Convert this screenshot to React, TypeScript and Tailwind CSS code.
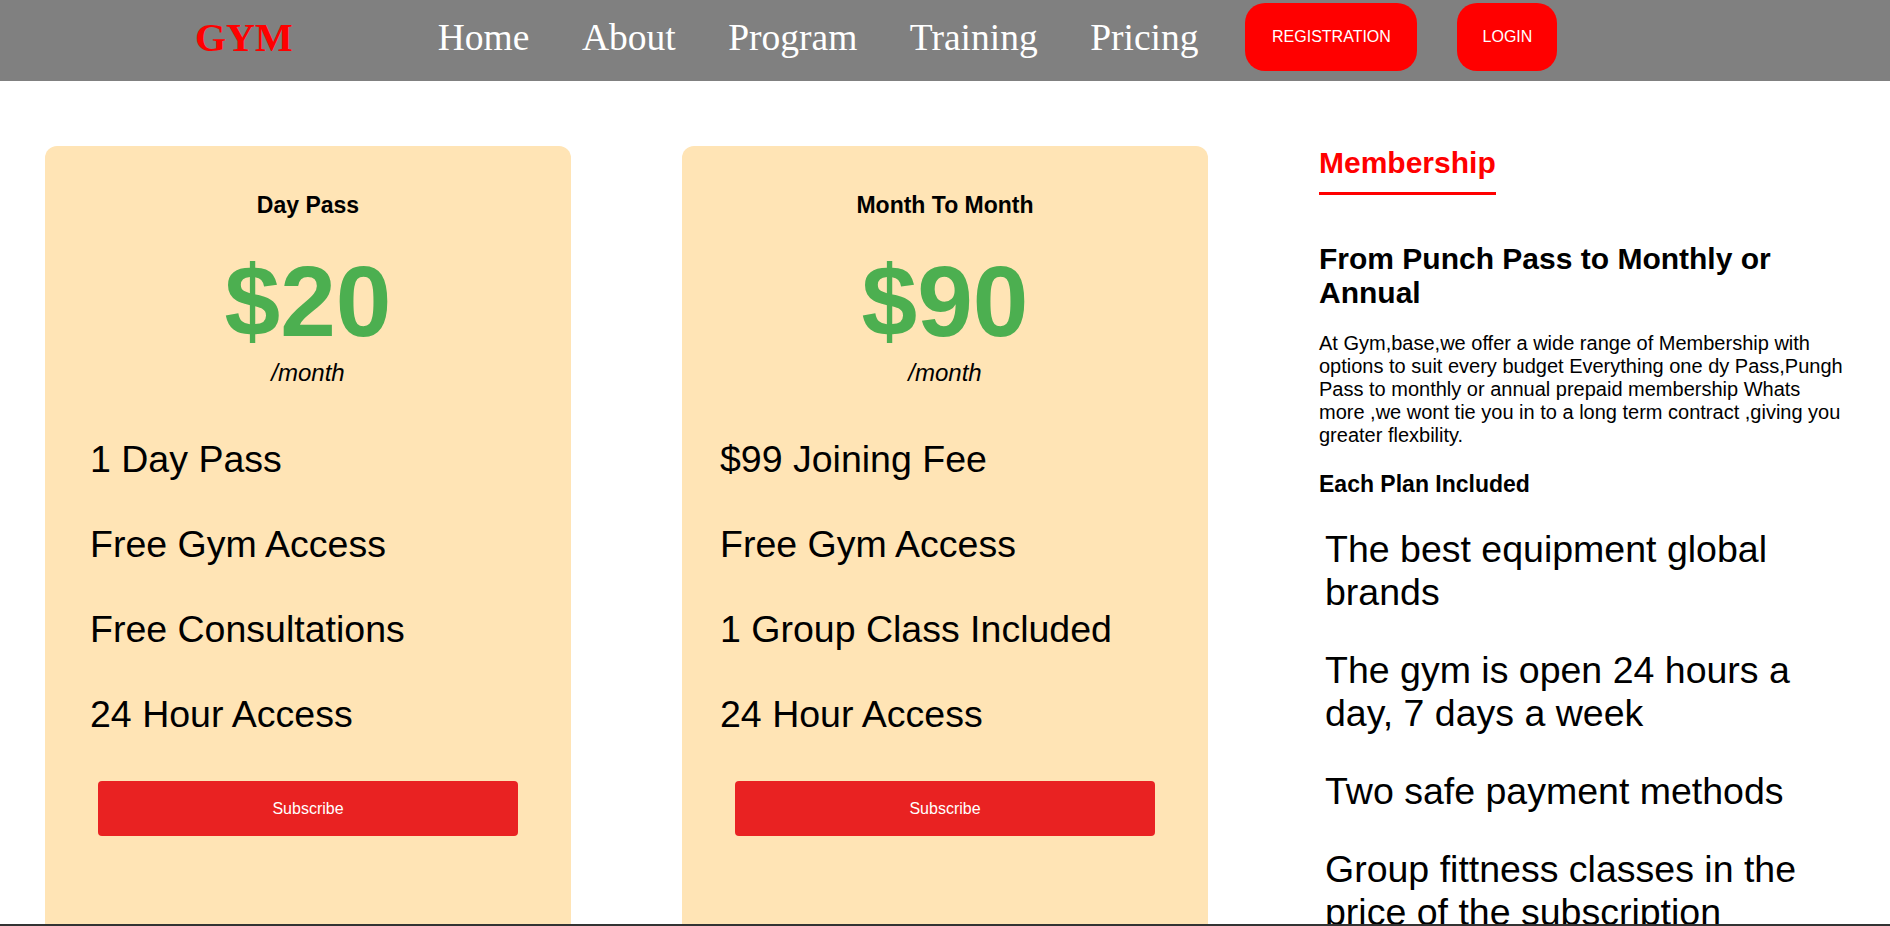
const links = ['Home', 'About', 'Program', 'Training', 'Pricing'];

const plans = [
  {
    name: 'Day Pass',
    price: '$20',
    pad: 'pl-[45px]',
    items: ['1 Day Pass', 'Free Gym Access', 'Free Consultations', '24 Hour Access'],
  },
  {
    name: 'Month To Month',
    price: '$90',
    pad: 'pl-[38px]',
    items: ['$99 Joining Fee', 'Free Gym Access', '1 Group Class Included', '24 Hour Access'],
  },
];

const perks = [
  'The best equipment global brands',
  'The gym is open 24 hours a day, 7 days a week',
  'Two safe payment methods',
  'Group fittness classes in the price of the subscription',
];

function Navbar() {
  return (
    <nav className="h-[81px] bg-[#808080]">
      <div className="h-[74px] flex items-center pl-[195px]">
        <h1 className="font-['Liberation_Serif',serif] text-[40px] font-bold text-[#ff0000]">GYM</h1>
        <ul className="ml-[145px] flex gap-[52.5px] font-['Liberation_Serif',serif] text-[37.5px] text-white">
          {links.map((l) => (
            <li key={l}>
              <a href="#">{l}</a>
            </li>
          ))}
        </ul>
        <button className="ml-[47px] w-[172px] h-[68px] rounded-[20px] bg-[#ff0000] text-white text-[16px]">
          REGISTRATION
        </button>
        <button className="ml-[40px] w-[100px] h-[68px] rounded-[20px] bg-[#ff0000] text-white text-[16px]">
          LOGIN
        </button>
      </div>
    </nav>
  );
}

function PlanCard({ name, price, pad, items }: { name: string; price: string; pad: string; items: string[] }) {
  return (
    <div className="bg-[#ffe4b5] rounded-[12px] pt-[46px] pb-[100px]">
      <h3 className="text-center text-[23px] font-bold">{name}</h3>
      <p className="mt-[25px] text-center text-[100px] font-bold text-[#4caf50]">{price}</p>
      <p className="text-center text-[24px] italic">/month</p>
      <ul className={`mt-[51px] ${pad} flex flex-col gap-[42px] text-[37.5px]`}>
        {items.map((it) => (
          <li key={it}>{it}</li>
        ))}
      </ul>
      <button className="mt-[45px] mx-auto block w-[420px] h-[55px] rounded-[4px] bg-[#e92222] text-white text-[16px]">
        Subscribe
      </button>
    </div>
  );
}

export default function App() {
  return (
    <div className="min-h-screen bg-white text-black font-['Liberation_Sans',Arial,sans-serif] leading-[normal]">
      <Navbar />
      <section className="mt-[65px] grid grid-cols-3 gap-[111px] px-[45px] items-start">
        {plans.map((p) => (
          <PlanCard key={p.name} {...p} />
        ))}
        <div>
          <h2 className="inline-block text-[30px] font-bold text-[#ff0000] pb-[12px] border-b-[3px] border-[#ff0000]">
            Membership
          </h2>
          <h2 className="mt-[47px] text-[30px] font-bold">From Punch Pass to Monthly or Annual</h2>
          <p className="mt-[22px] text-[20px]">
            At Gym,base,we offer a wide range of Membership with options to suit every budget Everything one dy
            Pass,Pungh Pass to monthly or annual prepaid membership Whats more ,we wont tie you in to a long term
            contract ,giving you greater flexbility.
          </p>
          <h3 className="mt-[24px] text-[23px] font-bold">Each Plan Included</h3>
          <ul className="mt-[30px] pl-[6px] flex flex-col gap-[35px] text-[37.5px]">
            {perks.map((p) => (
              <li key={p}>{p}</li>
            ))}
          </ul>
        </div>
      </section>
      <div className="fixed bottom-0 left-0 right-0 h-[2px] bg-[#333]" />
    </div>
  );
}
